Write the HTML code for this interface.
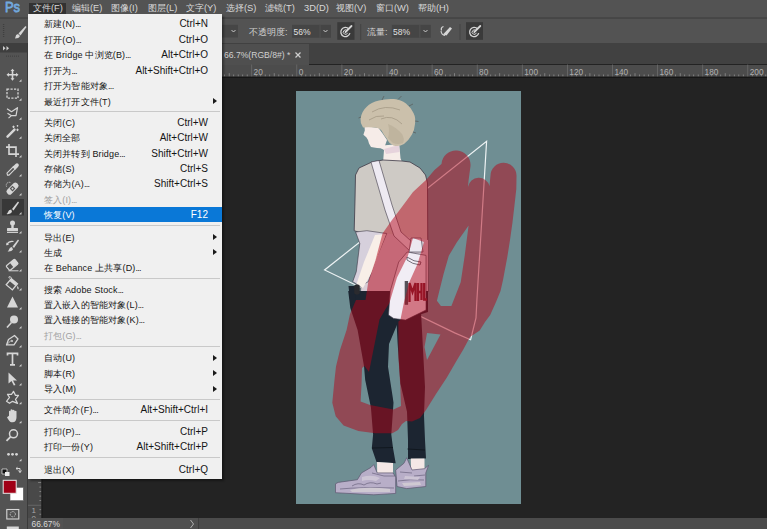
<!DOCTYPE html>
<html><head><meta charset="utf-8">
<style>
*{margin:0;padding:0;box-sizing:border-box}
html,body{width:767px;height:529px;overflow:hidden;background:#232323;font-family:"Liberation Sans",sans-serif}
.a{position:absolute}
#menubar{left:0;top:0;width:767px;height:17px;background:#535353}
#optbar{left:0;top:17px;width:767px;height:26px;background:#535353;border-top:1px solid #474747}
#optline{display:none}
#tabbar{left:0;top:43.3px;width:767px;height:21.2px;background:#414141}
#tab{left:29px;top:44px;width:280px;height:20.5px;background:#4f4f4f}
#hruler{left:29px;top:64.5px;width:738px;height:12.5px;background:#4c4c4c}
#vruler{left:28px;top:77px;width:13.5px;height:441px;background:#494949}
#toolbar{left:0;top:43px;width:28px;height:486px;background:#535353;border-right:1px solid #3a3a3a}
#status{left:28px;top:518px;width:739px;height:11px;background:#4b4b4b}
#canvas{left:296px;top:91px;width:225px;height:413px;background:#6f8e93}
.mt{top:3px;height:11px;font-size:9.3px;line-height:11px;color:#d8d8d8;white-space:nowrap}
#menu{left:28px;top:14px;width:194px;height:465px;background:#f0f0f0;box-shadow:2px 2px 2px rgba(0,0,0,.35)}
.mi{left:16px;letter-spacing:0.15px;font-size:9px;line-height:12px;color:#151515;white-space:nowrap}
.sc{right:14px;font-size:10px;line-height:12px;color:#151515;white-space:nowrap;text-align:right}
.sep{left:2px;width:190px;height:1px;background:#c9c9c9}
.dis{color:#a0a0a0}
.dd{letter-spacing:-0.7px}
.arr{right:5px;width:0;height:0;border-left:4px solid #1a1a1a;border-top:3.5px solid transparent;border-bottom:3.5px solid transparent}
</style></head><body>
<div class="a" id="menubar"></div>
<div class="a" id="optbar"></div>
<div class="a" id="optline"></div>
<div class="a" id="tabbar"></div>
<div class="a" id="tab"></div>
<div class="a" id="hruler"></div>
<div class="a" id="vruler"></div>
<div class="a" id="status"></div>
<div class="a" id="toolbar"></div>
<div class="a" id="canvas"></div>
<!-- illus -->
<svg class="a" style="left:296px;top:91px" width="225" height="413" viewBox="296 91 225 413">
<rect x="296" y="91" width="225" height="413" fill="#6f8e93"/>
<path d="M486.6,141.3 L476.9,300 L476,318 L470.6,339.7 L454.7,332.9 L324.6,270 Z" fill="none" stroke="#eef3f4" stroke-width="1.2" stroke-linejoin="miter"/>
<path d="M377.0,146.0 L399.2,144.0 L400.5,158.2 L402.0,162.0 L383.0,163.0 L384.0,150.0 Z" fill="#f6ece8"/>
<path d="M384.0,149.0 L399.0,145.0 L399.5,152.0 L386.0,154.0 Z" fill="#e6d3dc"/>
<path d="M364.5,126.0 L378.5,127.9 L382.6,133.4 L387.0,140.0 L384.0,148.6 L377.0,148.0 L371.0,147.0 L369.0,143.5 L368.0,140.0 L366.3,137.2 L363.4,134.8 L364.8,130.5 Z" fill="#f6ece8"/>
<path d="M363,127.5 Q360,123 360.5,118.5 Q362,111 366.5,107 Q371,102 379,100.5 Q386,98.5 394,99 Q401,99.5 406,103.5 Q411,107.5 413.5,113 Q416,118 415,124 Q414.5,130 412,134.5 Q409,140 404,144 Q399,147 393.5,145.5 Q389,143.5 387,139 Q383.5,134.5 381.5,130.5 Q379,127.5 374,127.5 Q368,127 363,127.5 Z" fill="#cbc0ab"/>
<path d="M388,138 Q390,131 388,124 Q396,127 402,134 Q405,139 403,143 Q398,145 393,143 Z" fill="#bcb09b" opacity="0.8"/>
<path d="M372,112 Q385,104 400,110 M381,119 Q392,114 402,124 M369,120 Q376,115 384,116" stroke="#9f937f" stroke-width="0.7" fill="none"/>
<path d="M382,100 L384,96 M398,99.5 L401.5,96 M409,106 L413,104 M361,117 L358.5,118 M415,121 L418.5,121.5 M413,132 L416,133" stroke="#55524f" stroke-width="0.6"/>
<path d="M355.5,175.0 L359.0,168.0 L372.0,162.0 L383.0,160.0 L402.0,161.0 L410.0,162.0 L420.0,168.0 L425.5,175.0 L427.5,183.0 L428.0,292.0 L361.0,292.0 L361.5,233.0 L354.2,230.7 L355.0,200.0 Z" fill="#cecac5" stroke="#3d3846" stroke-width="0.8"/>
<path d="M386.7,233.5 L428.0,240.0 L428.0,292.0 L361.0,292.0 L366.9,232.0 Z" fill="#d8cdd6"/>
<path d="M355.6,232.0 L366.9,230.7 L386.7,233.5 L375.4,260.4 L368.3,281.7 L360.0,286.0 L352.7,281.7 L356.3,271.7 L359.8,243.4 Z" fill="#d6d0dc" stroke="#3d3846" stroke-width="0.6"/>
<path d="M375.0,235.0 L386.0,234.0 L380.0,250.0 L372.0,272.0 L363.0,288.0 L356.5,284.0 L364.0,262.0 Z" fill="#f8efe8"/>
<path d="M371.0,162.0 L379.0,160.5 L392.0,205.0 L401.0,232.0 L421.0,250.0 L411.0,252.0 L394.0,236.0 L385.0,210.0 Z" fill="#eeeaf2" stroke="#3d3846" stroke-width="0.6"/>
<path d="M348.2,291.0 L428.0,291.0 L428.0,312.0 L398.4,321.4 L389.0,344.0 L388.0,366.8 L392.7,397.0 L393.5,402.7 L391.3,434.5 L393.0,448.0 L395.7,463.3 L376.5,462.0 L371.8,448.2 L373.1,434.5 L370.9,407.2 L365.2,380.0 L364.0,366.0 L357.6,330.0 L350.3,308.0 Z" fill="#1c2531"/>
<path d="M396.0,312.0 L421.0,312.0 L422.5,340.0 L425.0,387.0 L424.0,415.6 L425.0,440.0 L426.0,458.5 L408.0,459.0 L408.0,440.0 L407.0,411.8 L400.4,383.5 L397.6,343.0 Z" fill="#1c2531"/>
<path d="M372,448 L393,447.5 M407.5,449 L425,450" stroke="#0e141b" stroke-width="0.8"/>
<path d="M398.7,262.0 L407.2,252.0 L426.0,255.4 L426.0,310.0 L405.5,320.1 L393.6,318.4 L388.5,315.0 L390.2,291.2 Z" fill="#f1edf5" stroke="#3d3846" stroke-width="0.6"/>
<path d="M411,238 L421,238 L423,252 L409,252 Z" fill="#ece8f0" stroke="#3d3846" stroke-width="0.6"/>
<path d="M407,257 Q414,262 421,262 L420,265 Q412,264 407,260 Z" fill="none" stroke="#3d3846" stroke-width="0.7"/>
<rect x="404.7" y="281" width="3.4" height="23.8" fill="#555058"/>
<path d="M409.5,302 V283 L412.5,292 L415.5,283 V301 M418,283 V301 M418,292 H421.5 M421.5,283 V300 M424.2,283 V299.5 H427" stroke="#7a2434" stroke-width="2.3" fill="none" stroke-linejoin="miter"/>
<path d="M348.5,286.0 L355.6,286.0 L356.0,300.0 L350.0,300.0 Z" fill="#1c2531"/>
<rect x="354.2" y="284.5" width="5.6" height="9.9" rx="2" fill="#2a2a2e"/>
<path d="M377.0,462.0 L393.0,463.0 L393.0,474.0 L377.2,473.0 Z" fill="#f4e8e6"/>
<path d="M410.8,458.5 L424.5,458.5 L424.5,470.0 L411.0,470.0 Z" fill="#f4e8e6"/>
<path d="M395.7,470.1 L403.9,463.3 L406.7,457.8 L412.0,470.0 L424.5,468.7 L428.6,465.3 L425.8,472.9 L425.8,486.5 L406.7,488.6 L397.0,486.5 Z" fill="#b8aec8" stroke="#5d5670" stroke-width="0.7"/>
<path d="M335.5,483.8 L338.2,482.4 L357.4,479.7 L361.5,472.9 L371.0,467.4 L373.8,464.6 L377.2,472.9 L393.0,472.9 L395.7,477.0 L395.7,493.4 L373.8,494.8 L335.5,492.7 Z" fill="#b8aec8" stroke="#5d5670" stroke-width="0.7"/>
<path d="M352,486 Q358,482 364,485 Q370,481 377,484 L381,483 M340,489 Q360,487 394,488 M398,481 Q410,479 424,480 M414,476 L425,475 M372,473 L384,476 L395,476 M400,472 L412,473" stroke="#5d5670" stroke-width="0.6" fill="none"/>
<path d="M362,477 Q372,474 380,478 L376,481 Q368,479 362,481 Z M405,476 L420,477 L418,480 L404,479 Z" fill="#d2cbd8" opacity="0.8"/>
<path d="M350,490 Q365,486 390,489 L390,492 L352,492 Z M402,483 L420,482 L421,485 L404,486 Z" fill="#cfc9d2"/>
<path d="M441.5,164 A14.5,14.5 0 0 1 470.5,166 L468.5,181 L468,187 A11,11 0 0 1 489.5,186 L490.5,175.5 A13,13 0 0 1 516.5,176 L516.3,189 L514.5,205 L512.4,223 L510,240 L507.3,257 L503,280 L500.5,291 L496,302 L490.2,314.9 L485,322 L479.7,330.6 L470,337 L463,350 L457,360 L446.7,377.8 L436,394 L426,410 L420,418 L412,421.5 L406,421 L402,424 L398,430 L392.4,433.3 L375.4,433.3 L358.4,431 L343.6,425.4 L335.7,416.3 L332.3,402.7 L334.5,380 L336,366.4 L340,350 L346.6,330 L350,314 L356,300 L365.5,300 L368.3,281.7 L375.4,260.4 L382.5,233.5 L392,220 L400,209.5 L413,192 L426,180 L434.5,170 Z M468.6,225.4 L464.7,255.8 L460.7,282.2 L451.4,306.0 L440.9,306.0 L436.9,300.7 L443.5,274.3 L448.8,255.8 L456.7,242.6 Z M427.0,333.0 L440.5,334.5 L427.0,360.0 L424.5,347.0 Z M413.0,238.0 L408.0,255.4 L397.0,277.6 L389.4,303.1 L385.0,310.0 L379.5,319.5 L373.8,347.9 L369.0,372.0 L364.5,366.0 L362.0,368.0 L361.5,385.0 L360.6,401.6 L370.0,405.0 L393.5,409.5 L401.0,406.0 L400.3,385.7 L398.4,357.3 L398.4,321.4 L400.4,320.0 L403.8,303.0 L409.0,282.7 L417.5,264.0 L424.0,242.0 Z" fill="#b40318" fill-opacity="0.5" fill-rule="evenodd"/>
</svg>
<!-- /illus -->
<!-- toolbar -->
<svg class="a" style="left:0;top:0" width="28" height="529" viewBox="0 0 28 529"><rect x="0" y="43" width="27" height="9.5" fill="#3e3e3e"/><path d="M3,46 l2.5,2.2 l-2.5,2.2 z M6.5,46 l2.5,2.2 l-2.5,2.2 z" fill="#cfcfcf"/><path d="M6,56.3 H20" stroke="#454545" stroke-width="1.5" stroke-dasharray="1,1"/><rect x="2" y="199" width="22" height="16.5" fill="#383838"/><g transform="translate(12.5,74.70)"><path d="M0,-6 L-2,-3.6 L-0.8,-3.6 L-0.8,-0.8 L-3.6,-0.8 L-3.6,-2 L-6,0 L-3.6,2 L-3.6,0.8 L-0.8,0.8 L-0.8,3.6 L-2,3.6 L0,6 L2,3.6 L0.8,3.6 L0.8,0.8 L3.6,0.8 L3.6,2 L6,0 L3.6,-2 L3.6,-0.8 L0.8,-0.8 L0.8,-3.6 L2,-3.6 Z" fill="#d6d6d6"/></g><path d="M21.5,79.20 l0,2.5 l-2.5,0 z" fill="#cfcfcf"/><g transform="translate(12.5,93.68)"><rect x="-5.5" y="-4.5" width="11" height="9" fill="none" stroke="#d6d6d6" stroke-width="1.3" stroke-dasharray="2.2,1.3"/></g><path d="M21.5,98.18 l0,2.5 l-2.5,0 z" fill="#cfcfcf"/><g transform="translate(12.5,112.66)"><path d="M-5.5,-4 L-1,-1 L5,-5 L3.5,3 L-1,3 L-4,5.5 M-1,3 L-5,0.5" fill="none" stroke="#d6d6d6" stroke-width="1.2" stroke-linejoin="round"/></g><path d="M21.5,117.16 l0,2.5 l-2.5,0 z" fill="#cfcfcf"/><g transform="translate(12.5,131.64)"><path d="M-5,5 L2,-2" stroke="#d6d6d6" stroke-width="2.4" stroke-linecap="round"/><path d="M1,-6 v2.5 M-0.2,-4.8 h2.5 M5,-3 v2.5 M3.8,-1.8 h2.5 M5,-6.5 v1.5 M4.2,-5.8 h1.6" stroke="#d6d6d6" stroke-width="1"/></g><path d="M21.5,136.14 l0,2.5 l-2.5,0 z" fill="#cfcfcf"/><g transform="translate(12.5,150.62)"><path d="M-3.5,-6.5 V3.5 H6.5 M-6.5,-3.5 H3.5 V6.5" fill="none" stroke="#d6d6d6" stroke-width="1.6"/></g><path d="M21.5,155.12 l0,2.5 l-2.5,0 z" fill="#cfcfcf"/><g transform="translate(12.5,169.60)"><path d="M-5,5.5 L-5.5,3.5 L1,-3 L3,-1 L-3.5,5.5 Z" fill="none" stroke="#d6d6d6" stroke-width="1.1"/><path d="M0,-2.5 L3,-5.5 Q4.5,-7 6,-5.5 Q7,-4 5.5,-2.5 L2.5,0.5 Z" fill="#d6d6d6"/></g><path d="M21.5,174.10 l0,2.5 l-2.5,0 z" fill="#cfcfcf"/><g transform="translate(12.5,188.58)"><g transform="rotate(-45)"><rect x="-7" y="-3" width="14" height="6" rx="2.5" fill="#d6d6d6"/><rect x="-2" y="-2" width="4" height="4" fill="#535353"/><circle cx="0" cy="0" r="1" fill="#d6d6d6"/></g><path d="M-6,-2 A3,3 0 0 1 -2,-6" stroke="#d6d6d6" stroke-width="1" fill="none" stroke-dasharray="1,1"/></g><path d="M21.5,193.08 l0,2.5 l-2.5,0 z" fill="#cfcfcf"/><g transform="translate(12.5,207.56)"><path d="M5.5,-6 L-0.5,1.5 L1,3 L6.5,-5 Z" fill="#d6d6d6"/><path d="M-1.2,2 Q-4,2 -4.5,4.5 Q-5,6 -6,6.5 Q-2,7 -0.5,4.5 Z" fill="#d6d6d6"/></g><path d="M21.5,212.06 l0,2.5 l-2.5,0 z" fill="#cfcfcf"/><g transform="translate(12.5,226.54)"><circle cx="0" cy="-3.5" r="2.5" fill="#d6d6d6"/><rect x="-1.2" y="-2" width="2.4" height="4" fill="#d6d6d6"/><rect x="-5.5" y="1.5" width="11" height="3" rx="0.5" fill="#d6d6d6"/><rect x="-5.5" y="5.2" width="11" height="1.2" fill="#d6d6d6"/></g><path d="M21.5,231.04 l0,2.5 l-2.5,0 z" fill="#cfcfcf"/><g transform="translate(12.5,245.52)"><path d="M5.5,-6 L0,1 L1.5,2.5 L6.5,-5 Z" fill="#d6d6d6"/><path d="M-0.5,1.5 Q-3,1.5 -3.5,4 Q-4,5.5 -5,6 Q-1,6.5 0.5,4 Z" fill="#d6d6d6"/><path d="M-6,-1 Q-3,-5 1,-4" fill="none" stroke="#d6d6d6" stroke-width="1.2"/><path d="M-6,-3 L-6,0 L-3.5,-1" fill="#d6d6d6"/></g><path d="M21.5,250.02 l0,2.5 l-2.5,0 z" fill="#cfcfcf"/><g transform="translate(12.5,264.50)"><g transform="rotate(-40)"><rect x="-6" y="-3" width="11" height="6" rx="1" fill="none" stroke="#d6d6d6" stroke-width="1.2"/><rect x="-1" y="-3" width="6" height="6" fill="#d6d6d6"/></g><path d="M-4,6.3 H6" stroke="#d6d6d6" stroke-width="1"/></g><path d="M21.5,269.00 l0,2.5 l-2.5,0 z" fill="#cfcfcf"/><g transform="translate(12.5,283.48)"><g transform="rotate(40)"><rect x="-4" y="-3" width="8" height="8" fill="none" stroke="#d6d6d6" stroke-width="1.3"/><path d="M-4,-3 H4 V0 H-4 Z" fill="#d6d6d6"/></g><path d="M-3,-5 Q-5,-8 -1,-6" fill="none" stroke="#d6d6d6" stroke-width="1"/><path d="M5,2 Q7,5 5.5,6 Q4,5 5,2" fill="#d6d6d6"/></g><path d="M21.5,287.98 l0,2.5 l-2.5,0 z" fill="#cfcfcf"/><g transform="translate(12.5,302.46)"><path d="M0,-6 L5.5,5 H-5.5 Z" fill="#d6d6d6"/></g><path d="M21.5,306.96 l0,2.5 l-2.5,0 z" fill="#cfcfcf"/><g transform="translate(12.5,321.44)"><circle cx="1.5" cy="-2" r="4" fill="#d6d6d6"/><path d="M-1,1 L-5.5,6" stroke="#d6d6d6" stroke-width="1.6"/></g><path d="M21.5,325.94 l0,2.5 l-2.5,0 z" fill="#cfcfcf"/><g transform="translate(12.5,340.42)"><path d="M-6,4.5 L-4,-1 L2,-5 L5.5,-1.5 L1.5,4.5 Z" fill="none" stroke="#d6d6d6" stroke-width="1.3" stroke-linejoin="round"/><circle cx="-0.5" cy="0.5" r="1" fill="#d6d6d6"/><path d="M-6,4.5 L-1,-0.3" stroke="#d6d6d6" stroke-width="0.8"/></g><path d="M21.5,344.92 l0,2.5 l-2.5,0 z" fill="#cfcfcf"/><g transform="translate(12.5,359.40)"><path d="M-5,-4 V-6 H5 V-4 M0,-6 V5.5 M-2.5,5.5 H2.5" fill="none" stroke="#d6d6d6" stroke-width="1.7"/></g><path d="M21.5,363.90 l0,2.5 l-2.5,0 z" fill="#cfcfcf"/><g transform="translate(12.5,378.38)"><path d="M-4,-6 L4.5,2 L0.5,2 L3,6.5 L1.3,7 L-1,2.5 L-4,5 Z" fill="#d6d6d6"/></g><path d="M21.5,382.88 l0,2.5 l-2.5,0 z" fill="#cfcfcf"/><g transform="translate(12.5,397.36)"><path d="M-6,4 L-3,0 L-5,-3 L-1,-3 L1,-6 L3,-2 L6,-2 L3,2 L5,6 L0,4 L-3,6 Z" fill="none" stroke="#d6d6d6" stroke-width="1.2" stroke-linejoin="round"/></g><path d="M21.5,401.86 l0,2.5 l-2.5,0 z" fill="#cfcfcf"/><g transform="translate(12.5,416.34)"><path d="M-5.5,1 L-3.5,-0.5 V-5 Q-2.8,-6 -2,-5 V-6.5 Q-1,-7.5 0,-6.5 V-6 Q1,-7 2,-6 V-5 Q3,-6 4,-5 V1 Q4,6 0,6 H-1 Q-3,6 -5.5,1 Z" fill="#d6d6d6"/></g><path d="M21.5,420.84 l0,2.5 l-2.5,0 z" fill="#cfcfcf"/><g transform="translate(12.5,435.32)"><circle cx="1" cy="-1.5" r="4" fill="none" stroke="#d6d6d6" stroke-width="1.5"/><path d="M-2,1.5 L-6,5.5" stroke="#d6d6d6" stroke-width="1.8"/></g><g transform="translate(12.5,454.30)"><circle cx="-4" cy="0" r="1.4" fill="#d6d6d6"/><circle cx="0" cy="0" r="1.4" fill="#d6d6d6"/><circle cx="4" cy="0" r="1.4" fill="#d6d6d6"/></g><path d="M21.5,458.80 l0,2.5 l-2.5,0 z" fill="#cfcfcf"/><path d="M2,469 h5 v5 h-5 z" fill="#111" stroke="#ddd" stroke-width="0.8"/><path d="M5,472 h4.5 v4 h-4.5 z" fill="#eee"/><path d="M16,468.5 h4 v4 M18.5,470.5 l1.5,2 l1.5,-2 M16,468.5 l1.5,-1.2 M16,468.5 l1.5,1.2" fill="none" stroke="#d6d6d6" stroke-width="1"/><rect x="10" y="487.3" width="13.3" height="13.4" fill="#fff" stroke="#5a5a5a" stroke-width="0.6"/><rect x="3.2" y="480.3" width="13" height="13" fill="#a00016" stroke="#e8e8e8" stroke-width="1"/><rect x="6.8" y="509.5" width="12" height="9.5" fill="none" stroke="#d6d6d6" stroke-width="1.1"/><circle cx="12.8" cy="514.2" r="2.6" fill="none" stroke="#d6d6d6" stroke-width="1" stroke-dasharray="1,0.8"/><rect x="6.8" y="526.5" width="12" height="3" fill="#d6d6d6"/></svg>

<div class="a" style="left:0;top:18px;width:767px;height:1.3px;background:#464646"></div>
<svg class="a" style="left:0;top:0" width="767" height="80" viewBox="0 0 767 80"><path d="M3.6,24 V38" stroke="#3f3f3f" stroke-width="1.3" stroke-dasharray="1,1"/><path d="M25.5,26 L18.5,33.5 L20.5,35.5 L26.5,27 Z" fill="#d6d6d6"/><path d="M18,34 Q15.5,34.5 15.5,37 L15,38.5 Q19,38.5 20,36 Z" fill="#d6d6d6"/><rect x="222" y="24.8" width="16" height="12.7" fill="#464646"/><path d="M231.5,30 l2,2 l2,-2" fill="none" stroke="#d6d6d6" stroke-width="0.9"/><rect x="292" y="24.8" width="39" height="12.9" fill="#454545"/><rect x="319.6" y="24.8" width="0.9" height="12.9" fill="#535353"/><path d="M323.5,30 l2,2 l2,-2" fill="none" stroke="#d6d6d6" stroke-width="0.9"/><rect x="337.3" y="22.2" width="17.2" height="17.6" fill="#3a3a3a"/><path d="M348.7,28.8 A4.6,4.6 0 1 0 349.9,33.2" fill="none" stroke="#d6d6d6" stroke-width="1.3"/><path d="M347.1,30.6 A2.2,2.2 0 1 0 347.6,32.8" fill="none" stroke="#d6d6d6" stroke-width="1"/><path d="M345.5,32 L351.5,26" stroke="#d6d6d6" stroke-width="1.8" stroke-linecap="round"/><rect x="360.2" y="24" width="1" height="16" fill="#444"/><rect x="391.8" y="24.8" width="39" height="12.9" fill="#454545"/><rect x="419.4" y="24.8" width="0.9" height="12.9" fill="#535353"/><path d="M423.5,30 l2,2 l2,-2" fill="none" stroke="#d6d6d6" stroke-width="0.9"/><path d="M441.5,30.5 Q440.5,27.5 443.5,26.5" fill="none" stroke="#d6d6d6" stroke-width="1.2"/><path d="M443,34.5 L450,27 L452,28.5 L446.5,35.5 Z" fill="#d6d6d6"/><path d="M441,31 Q441.5,35 445,35.5" fill="none" stroke="#d6d6d6" stroke-width="1.1"/><rect x="459.5" y="24" width="1" height="16" fill="#444"/><rect x="466" y="22.2" width="17" height="17.6" fill="#3a3a3a"/><path d="M477.5,28.8 A4.6,4.6 0 1 0 478.7,33.2" fill="none" stroke="#d6d6d6" stroke-width="1.3"/><path d="M475.90000000000003,30.6 A2.2,2.2 0 1 0 476.40000000000003,32.8" fill="none" stroke="#d6d6d6" stroke-width="1"/><path d="M474.3,32 L480.3,26" stroke="#d6d6d6" stroke-width="1.8" stroke-linecap="round"/></svg>
<div class="a" style="left:249px;top:26px;font-size:9px;line-height:12px;color:#d0d0d0;white-space:nowrap">不透明度:</div>
<div class="a" style="left:293.5px;top:26px;font-size:8.5px;line-height:12px;color:#e0e0e0;white-space:nowrap">56%</div>
<div class="a" style="left:367px;top:26px;font-size:9px;line-height:12px;color:#d0d0d0;white-space:nowrap">流量:</div>
<div class="a" style="left:393px;top:26px;font-size:8.5px;line-height:12px;color:#e0e0e0;white-space:nowrap">58%</div>
<div class="a" style="left:224px;top:48.5px;font-size:8.6px;line-height:12px;color:#d0d0d0;white-space:nowrap">66.7%(RGB/8#) *</div>
<svg class="a" style="left:294px;top:51px" width="8" height="8" viewBox="0 0 8 8"><path d="M1.5,1.5 L6.5,6.5 M6.5,1.5 L1.5,6.5" stroke="#cfcfcf" stroke-width="1.2"/></svg>
<!-- ruler --><svg class="a" style="left:0;top:0" width="767" height="529" viewBox="0 0 767 529"><rect x="70.9" y="64.5" width="0.8" height="12.5" fill="#6c6c6c"/><text x="73.2" y="74.6" font-size="8.3" fill="#b0b0b0" font-family="Liberation Sans">100</text><rect x="116.0" y="64.5" width="0.8" height="12.5" fill="#6c6c6c"/><text x="118.3" y="74.6" font-size="8.3" fill="#b0b0b0" font-family="Liberation Sans">80</text><rect x="161.1" y="64.5" width="0.8" height="12.5" fill="#6c6c6c"/><text x="163.4" y="74.6" font-size="8.3" fill="#b0b0b0" font-family="Liberation Sans">60</text><rect x="206.2" y="64.5" width="0.8" height="12.5" fill="#6c6c6c"/><text x="208.5" y="74.6" font-size="8.3" fill="#b0b0b0" font-family="Liberation Sans">40</text><rect x="251.3" y="64.5" width="0.8" height="12.5" fill="#6c6c6c"/><text x="253.6" y="74.6" font-size="8.3" fill="#b0b0b0" font-family="Liberation Sans">20</text><rect x="296.4" y="64.5" width="0.8" height="12.5" fill="#6c6c6c"/><text x="298.7" y="74.6" font-size="8.3" fill="#b0b0b0" font-family="Liberation Sans">0</text><rect x="341.5" y="64.5" width="0.8" height="12.5" fill="#6c6c6c"/><text x="343.8" y="74.6" font-size="8.3" fill="#b0b0b0" font-family="Liberation Sans">20</text><rect x="386.6" y="64.5" width="0.8" height="12.5" fill="#6c6c6c"/><text x="388.9" y="74.6" font-size="8.3" fill="#b0b0b0" font-family="Liberation Sans">40</text><rect x="431.7" y="64.5" width="0.8" height="12.5" fill="#6c6c6c"/><text x="434.0" y="74.6" font-size="8.3" fill="#b0b0b0" font-family="Liberation Sans">60</text><rect x="476.8" y="64.5" width="0.8" height="12.5" fill="#6c6c6c"/><text x="479.1" y="74.6" font-size="8.3" fill="#b0b0b0" font-family="Liberation Sans">80</text><rect x="521.9" y="64.5" width="0.8" height="12.5" fill="#6c6c6c"/><text x="524.2" y="74.6" font-size="8.3" fill="#b0b0b0" font-family="Liberation Sans">100</text><rect x="567.0" y="64.5" width="0.8" height="12.5" fill="#6c6c6c"/><text x="569.3" y="74.6" font-size="8.3" fill="#b0b0b0" font-family="Liberation Sans">120</text><rect x="612.1" y="64.5" width="0.8" height="12.5" fill="#6c6c6c"/><text x="614.4" y="74.6" font-size="8.3" fill="#b0b0b0" font-family="Liberation Sans">140</text><rect x="657.2" y="64.5" width="0.8" height="12.5" fill="#6c6c6c"/><text x="659.5" y="74.6" font-size="8.3" fill="#b0b0b0" font-family="Liberation Sans">160</text><rect x="702.3" y="64.5" width="0.8" height="12.5" fill="#6c6c6c"/><text x="704.6" y="74.6" font-size="8.3" fill="#b0b0b0" font-family="Liberation Sans">180</text><rect x="747.4" y="64.5" width="0.8" height="12.5" fill="#6c6c6c"/><text x="749.7" y="74.6" font-size="8.3" fill="#b0b0b0" font-family="Liberation Sans">200</text><rect x="43.8" y="74.5" width="0.8" height="2" fill="#8e8e8e"/><rect x="48.3" y="73.2" width="0.8" height="3.3" fill="#8e8e8e"/><rect x="52.9" y="74.5" width="0.8" height="2" fill="#8e8e8e"/><rect x="57.4" y="74.5" width="0.8" height="2" fill="#8e8e8e"/><rect x="61.9" y="74.5" width="0.8" height="2" fill="#8e8e8e"/><rect x="66.4" y="74.5" width="0.8" height="2" fill="#8e8e8e"/><rect x="75.4" y="74.5" width="0.8" height="2" fill="#8e8e8e"/><rect x="79.9" y="74.5" width="0.8" height="2" fill="#8e8e8e"/><rect x="84.4" y="74.5" width="0.8" height="2" fill="#8e8e8e"/><rect x="88.9" y="74.5" width="0.8" height="2" fill="#8e8e8e"/><rect x="93.4" y="73.2" width="0.8" height="3.3" fill="#8e8e8e"/><rect x="98.0" y="74.5" width="0.8" height="2" fill="#8e8e8e"/><rect x="102.5" y="74.5" width="0.8" height="2" fill="#8e8e8e"/><rect x="107.0" y="74.5" width="0.8" height="2" fill="#8e8e8e"/><rect x="111.5" y="74.5" width="0.8" height="2" fill="#8e8e8e"/><rect x="120.5" y="74.5" width="0.8" height="2" fill="#8e8e8e"/><rect x="125.0" y="74.5" width="0.8" height="2" fill="#8e8e8e"/><rect x="129.5" y="74.5" width="0.8" height="2" fill="#8e8e8e"/><rect x="134.0" y="74.5" width="0.8" height="2" fill="#8e8e8e"/><rect x="138.5" y="73.2" width="0.8" height="3.3" fill="#8e8e8e"/><rect x="143.1" y="74.5" width="0.8" height="2" fill="#8e8e8e"/><rect x="147.6" y="74.5" width="0.8" height="2" fill="#8e8e8e"/><rect x="152.1" y="74.5" width="0.8" height="2" fill="#8e8e8e"/><rect x="156.6" y="74.5" width="0.8" height="2" fill="#8e8e8e"/><rect x="165.6" y="74.5" width="0.8" height="2" fill="#8e8e8e"/><rect x="170.1" y="74.5" width="0.8" height="2" fill="#8e8e8e"/><rect x="174.6" y="74.5" width="0.8" height="2" fill="#8e8e8e"/><rect x="179.1" y="74.5" width="0.8" height="2" fill="#8e8e8e"/><rect x="183.6" y="73.2" width="0.8" height="3.3" fill="#8e8e8e"/><rect x="188.2" y="74.5" width="0.8" height="2" fill="#8e8e8e"/><rect x="192.7" y="74.5" width="0.8" height="2" fill="#8e8e8e"/><rect x="197.2" y="74.5" width="0.8" height="2" fill="#8e8e8e"/><rect x="201.7" y="74.5" width="0.8" height="2" fill="#8e8e8e"/><rect x="210.7" y="74.5" width="0.8" height="2" fill="#8e8e8e"/><rect x="215.2" y="74.5" width="0.8" height="2" fill="#8e8e8e"/><rect x="219.7" y="74.5" width="0.8" height="2" fill="#8e8e8e"/><rect x="224.2" y="74.5" width="0.8" height="2" fill="#8e8e8e"/><rect x="228.8" y="73.2" width="0.8" height="3.3" fill="#8e8e8e"/><rect x="233.3" y="74.5" width="0.8" height="2" fill="#8e8e8e"/><rect x="237.8" y="74.5" width="0.8" height="2" fill="#8e8e8e"/><rect x="242.3" y="74.5" width="0.8" height="2" fill="#8e8e8e"/><rect x="246.8" y="74.5" width="0.8" height="2" fill="#8e8e8e"/><rect x="255.8" y="74.5" width="0.8" height="2" fill="#8e8e8e"/><rect x="260.3" y="74.5" width="0.8" height="2" fill="#8e8e8e"/><rect x="264.8" y="74.5" width="0.8" height="2" fill="#8e8e8e"/><rect x="269.3" y="74.5" width="0.8" height="2" fill="#8e8e8e"/><rect x="273.8" y="73.2" width="0.8" height="3.3" fill="#8e8e8e"/><rect x="278.4" y="74.5" width="0.8" height="2" fill="#8e8e8e"/><rect x="282.9" y="74.5" width="0.8" height="2" fill="#8e8e8e"/><rect x="287.4" y="74.5" width="0.8" height="2" fill="#8e8e8e"/><rect x="291.9" y="74.5" width="0.8" height="2" fill="#8e8e8e"/><rect x="300.9" y="74.5" width="0.8" height="2" fill="#8e8e8e"/><rect x="305.4" y="74.5" width="0.8" height="2" fill="#8e8e8e"/><rect x="309.9" y="74.5" width="0.8" height="2" fill="#8e8e8e"/><rect x="314.4" y="74.5" width="0.8" height="2" fill="#8e8e8e"/><rect x="318.9" y="73.2" width="0.8" height="3.3" fill="#8e8e8e"/><rect x="323.5" y="74.5" width="0.8" height="2" fill="#8e8e8e"/><rect x="328.0" y="74.5" width="0.8" height="2" fill="#8e8e8e"/><rect x="332.5" y="74.5" width="0.8" height="2" fill="#8e8e8e"/><rect x="337.0" y="74.5" width="0.8" height="2" fill="#8e8e8e"/><rect x="346.0" y="74.5" width="0.8" height="2" fill="#8e8e8e"/><rect x="350.5" y="74.5" width="0.8" height="2" fill="#8e8e8e"/><rect x="355.0" y="74.5" width="0.8" height="2" fill="#8e8e8e"/><rect x="359.5" y="74.5" width="0.8" height="2" fill="#8e8e8e"/><rect x="364.1" y="73.2" width="0.8" height="3.3" fill="#8e8e8e"/><rect x="368.6" y="74.5" width="0.8" height="2" fill="#8e8e8e"/><rect x="373.1" y="74.5" width="0.8" height="2" fill="#8e8e8e"/><rect x="377.6" y="74.5" width="0.8" height="2" fill="#8e8e8e"/><rect x="382.1" y="74.5" width="0.8" height="2" fill="#8e8e8e"/><rect x="391.1" y="74.5" width="0.8" height="2" fill="#8e8e8e"/><rect x="395.6" y="74.5" width="0.8" height="2" fill="#8e8e8e"/><rect x="400.1" y="74.5" width="0.8" height="2" fill="#8e8e8e"/><rect x="404.6" y="74.5" width="0.8" height="2" fill="#8e8e8e"/><rect x="409.1" y="73.2" width="0.8" height="3.3" fill="#8e8e8e"/><rect x="413.7" y="74.5" width="0.8" height="2" fill="#8e8e8e"/><rect x="418.2" y="74.5" width="0.8" height="2" fill="#8e8e8e"/><rect x="422.7" y="74.5" width="0.8" height="2" fill="#8e8e8e"/><rect x="427.2" y="74.5" width="0.8" height="2" fill="#8e8e8e"/><rect x="436.2" y="74.5" width="0.8" height="2" fill="#8e8e8e"/><rect x="440.7" y="74.5" width="0.8" height="2" fill="#8e8e8e"/><rect x="445.2" y="74.5" width="0.8" height="2" fill="#8e8e8e"/><rect x="449.7" y="74.5" width="0.8" height="2" fill="#8e8e8e"/><rect x="454.2" y="73.2" width="0.8" height="3.3" fill="#8e8e8e"/><rect x="458.8" y="74.5" width="0.8" height="2" fill="#8e8e8e"/><rect x="463.3" y="74.5" width="0.8" height="2" fill="#8e8e8e"/><rect x="467.8" y="74.5" width="0.8" height="2" fill="#8e8e8e"/><rect x="472.3" y="74.5" width="0.8" height="2" fill="#8e8e8e"/><rect x="481.3" y="74.5" width="0.8" height="2" fill="#8e8e8e"/><rect x="485.8" y="74.5" width="0.8" height="2" fill="#8e8e8e"/><rect x="490.3" y="74.5" width="0.8" height="2" fill="#8e8e8e"/><rect x="494.8" y="74.5" width="0.8" height="2" fill="#8e8e8e"/><rect x="499.3" y="73.2" width="0.8" height="3.3" fill="#8e8e8e"/><rect x="503.9" y="74.5" width="0.8" height="2" fill="#8e8e8e"/><rect x="508.4" y="74.5" width="0.8" height="2" fill="#8e8e8e"/><rect x="512.9" y="74.5" width="0.8" height="2" fill="#8e8e8e"/><rect x="517.4" y="74.5" width="0.8" height="2" fill="#8e8e8e"/><rect x="526.4" y="74.5" width="0.8" height="2" fill="#8e8e8e"/><rect x="530.9" y="74.5" width="0.8" height="2" fill="#8e8e8e"/><rect x="535.4" y="74.5" width="0.8" height="2" fill="#8e8e8e"/><rect x="539.9" y="74.5" width="0.8" height="2" fill="#8e8e8e"/><rect x="544.4" y="73.2" width="0.8" height="3.3" fill="#8e8e8e"/><rect x="549.0" y="74.5" width="0.8" height="2" fill="#8e8e8e"/><rect x="553.5" y="74.5" width="0.8" height="2" fill="#8e8e8e"/><rect x="558.0" y="74.5" width="0.8" height="2" fill="#8e8e8e"/><rect x="562.5" y="74.5" width="0.8" height="2" fill="#8e8e8e"/><rect x="571.5" y="74.5" width="0.8" height="2" fill="#8e8e8e"/><rect x="576.0" y="74.5" width="0.8" height="2" fill="#8e8e8e"/><rect x="580.5" y="74.5" width="0.8" height="2" fill="#8e8e8e"/><rect x="585.0" y="74.5" width="0.8" height="2" fill="#8e8e8e"/><rect x="589.5" y="73.2" width="0.8" height="3.3" fill="#8e8e8e"/><rect x="594.1" y="74.5" width="0.8" height="2" fill="#8e8e8e"/><rect x="598.6" y="74.5" width="0.8" height="2" fill="#8e8e8e"/><rect x="603.1" y="74.5" width="0.8" height="2" fill="#8e8e8e"/><rect x="607.6" y="74.5" width="0.8" height="2" fill="#8e8e8e"/><rect x="616.6" y="74.5" width="0.8" height="2" fill="#8e8e8e"/><rect x="621.1" y="74.5" width="0.8" height="2" fill="#8e8e8e"/><rect x="625.6" y="74.5" width="0.8" height="2" fill="#8e8e8e"/><rect x="630.1" y="74.5" width="0.8" height="2" fill="#8e8e8e"/><rect x="634.6" y="73.2" width="0.8" height="3.3" fill="#8e8e8e"/><rect x="639.2" y="74.5" width="0.8" height="2" fill="#8e8e8e"/><rect x="643.7" y="74.5" width="0.8" height="2" fill="#8e8e8e"/><rect x="648.2" y="74.5" width="0.8" height="2" fill="#8e8e8e"/><rect x="652.7" y="74.5" width="0.8" height="2" fill="#8e8e8e"/><rect x="661.7" y="74.5" width="0.8" height="2" fill="#8e8e8e"/><rect x="666.2" y="74.5" width="0.8" height="2" fill="#8e8e8e"/><rect x="670.7" y="74.5" width="0.8" height="2" fill="#8e8e8e"/><rect x="675.2" y="74.5" width="0.8" height="2" fill="#8e8e8e"/><rect x="679.8" y="73.2" width="0.8" height="3.3" fill="#8e8e8e"/><rect x="684.3" y="74.5" width="0.8" height="2" fill="#8e8e8e"/><rect x="688.8" y="74.5" width="0.8" height="2" fill="#8e8e8e"/><rect x="693.3" y="74.5" width="0.8" height="2" fill="#8e8e8e"/><rect x="697.8" y="74.5" width="0.8" height="2" fill="#8e8e8e"/><rect x="706.8" y="74.5" width="0.8" height="2" fill="#8e8e8e"/><rect x="711.3" y="74.5" width="0.8" height="2" fill="#8e8e8e"/><rect x="715.8" y="74.5" width="0.8" height="2" fill="#8e8e8e"/><rect x="720.3" y="74.5" width="0.8" height="2" fill="#8e8e8e"/><rect x="724.8" y="73.2" width="0.8" height="3.3" fill="#8e8e8e"/><rect x="729.4" y="74.5" width="0.8" height="2" fill="#8e8e8e"/><rect x="733.9" y="74.5" width="0.8" height="2" fill="#8e8e8e"/><rect x="738.4" y="74.5" width="0.8" height="2" fill="#8e8e8e"/><rect x="742.9" y="74.5" width="0.8" height="2" fill="#8e8e8e"/><rect x="751.9" y="74.5" width="0.8" height="2" fill="#8e8e8e"/><rect x="756.4" y="74.5" width="0.8" height="2" fill="#8e8e8e"/><rect x="760.9" y="74.5" width="0.8" height="2" fill="#8e8e8e"/><rect x="765.4" y="74.5" width="0.8" height="2" fill="#8e8e8e"/><rect x="29" y="76.6" width="738" height="1.2" fill="#151515"/><rect x="28" y="98.8" width="13.4" height="0.8" fill="#6c6c6c"/><rect x="39.4" y="103.4" width="2" height="0.8" fill="#8e8e8e"/><rect x="39.4" y="107.9" width="2" height="0.8" fill="#8e8e8e"/><rect x="39.4" y="112.4" width="2" height="0.8" fill="#8e8e8e"/><rect x="39.4" y="116.9" width="2" height="0.8" fill="#8e8e8e"/><rect x="38.1" y="121.4" width="3.3" height="0.8" fill="#8e8e8e"/><rect x="39.4" y="125.9" width="2" height="0.8" fill="#8e8e8e"/><rect x="39.4" y="130.4" width="2" height="0.8" fill="#8e8e8e"/><rect x="39.4" y="134.9" width="2" height="0.8" fill="#8e8e8e"/><rect x="39.4" y="139.4" width="2" height="0.8" fill="#8e8e8e"/><rect x="28" y="143.9" width="13.4" height="0.8" fill="#6c6c6c"/><rect x="39.4" y="148.5" width="2" height="0.8" fill="#8e8e8e"/><rect x="39.4" y="153.0" width="2" height="0.8" fill="#8e8e8e"/><rect x="39.4" y="157.5" width="2" height="0.8" fill="#8e8e8e"/><rect x="39.4" y="162.0" width="2" height="0.8" fill="#8e8e8e"/><rect x="38.1" y="166.5" width="3.3" height="0.8" fill="#8e8e8e"/><rect x="39.4" y="171.0" width="2" height="0.8" fill="#8e8e8e"/><rect x="39.4" y="175.5" width="2" height="0.8" fill="#8e8e8e"/><rect x="39.4" y="180.0" width="2" height="0.8" fill="#8e8e8e"/><rect x="39.4" y="184.5" width="2" height="0.8" fill="#8e8e8e"/><rect x="28" y="189.0" width="13.4" height="0.8" fill="#6c6c6c"/><rect x="39.4" y="193.6" width="2" height="0.8" fill="#8e8e8e"/><rect x="39.4" y="198.1" width="2" height="0.8" fill="#8e8e8e"/><rect x="39.4" y="202.6" width="2" height="0.8" fill="#8e8e8e"/><rect x="39.4" y="207.1" width="2" height="0.8" fill="#8e8e8e"/><rect x="38.1" y="211.6" width="3.3" height="0.8" fill="#8e8e8e"/><rect x="39.4" y="216.1" width="2" height="0.8" fill="#8e8e8e"/><rect x="39.4" y="220.6" width="2" height="0.8" fill="#8e8e8e"/><rect x="39.4" y="225.1" width="2" height="0.8" fill="#8e8e8e"/><rect x="39.4" y="229.6" width="2" height="0.8" fill="#8e8e8e"/><rect x="28" y="234.1" width="13.4" height="0.8" fill="#6c6c6c"/><rect x="39.4" y="238.7" width="2" height="0.8" fill="#8e8e8e"/><rect x="39.4" y="243.2" width="2" height="0.8" fill="#8e8e8e"/><rect x="39.4" y="247.7" width="2" height="0.8" fill="#8e8e8e"/><rect x="39.4" y="252.2" width="2" height="0.8" fill="#8e8e8e"/><rect x="38.1" y="256.7" width="3.3" height="0.8" fill="#8e8e8e"/><rect x="39.4" y="261.2" width="2" height="0.8" fill="#8e8e8e"/><rect x="39.4" y="265.7" width="2" height="0.8" fill="#8e8e8e"/><rect x="39.4" y="270.2" width="2" height="0.8" fill="#8e8e8e"/><rect x="39.4" y="274.7" width="2" height="0.8" fill="#8e8e8e"/><rect x="28" y="279.2" width="13.4" height="0.8" fill="#6c6c6c"/><rect x="39.4" y="283.8" width="2" height="0.8" fill="#8e8e8e"/><rect x="39.4" y="288.3" width="2" height="0.8" fill="#8e8e8e"/><rect x="39.4" y="292.8" width="2" height="0.8" fill="#8e8e8e"/><rect x="39.4" y="297.3" width="2" height="0.8" fill="#8e8e8e"/><rect x="38.1" y="301.8" width="3.3" height="0.8" fill="#8e8e8e"/><rect x="39.4" y="306.3" width="2" height="0.8" fill="#8e8e8e"/><rect x="39.4" y="310.8" width="2" height="0.8" fill="#8e8e8e"/><rect x="39.4" y="315.3" width="2" height="0.8" fill="#8e8e8e"/><rect x="39.4" y="319.8" width="2" height="0.8" fill="#8e8e8e"/><rect x="28" y="324.3" width="13.4" height="0.8" fill="#6c6c6c"/><rect x="39.4" y="328.9" width="2" height="0.8" fill="#8e8e8e"/><rect x="39.4" y="333.4" width="2" height="0.8" fill="#8e8e8e"/><rect x="39.4" y="337.9" width="2" height="0.8" fill="#8e8e8e"/><rect x="39.4" y="342.4" width="2" height="0.8" fill="#8e8e8e"/><rect x="38.1" y="346.9" width="3.3" height="0.8" fill="#8e8e8e"/><rect x="39.4" y="351.4" width="2" height="0.8" fill="#8e8e8e"/><rect x="39.4" y="355.9" width="2" height="0.8" fill="#8e8e8e"/><rect x="39.4" y="360.4" width="2" height="0.8" fill="#8e8e8e"/><rect x="39.4" y="364.9" width="2" height="0.8" fill="#8e8e8e"/><rect x="28" y="369.4" width="13.4" height="0.8" fill="#6c6c6c"/><rect x="39.4" y="374.0" width="2" height="0.8" fill="#8e8e8e"/><rect x="39.4" y="378.5" width="2" height="0.8" fill="#8e8e8e"/><rect x="39.4" y="383.0" width="2" height="0.8" fill="#8e8e8e"/><rect x="39.4" y="387.5" width="2" height="0.8" fill="#8e8e8e"/><rect x="38.1" y="392.0" width="3.3" height="0.8" fill="#8e8e8e"/><rect x="39.4" y="396.5" width="2" height="0.8" fill="#8e8e8e"/><rect x="39.4" y="401.0" width="2" height="0.8" fill="#8e8e8e"/><rect x="39.4" y="405.5" width="2" height="0.8" fill="#8e8e8e"/><rect x="39.4" y="410.0" width="2" height="0.8" fill="#8e8e8e"/><rect x="28" y="414.5" width="13.4" height="0.8" fill="#6c6c6c"/><rect x="39.4" y="419.1" width="2" height="0.8" fill="#8e8e8e"/><rect x="39.4" y="423.6" width="2" height="0.8" fill="#8e8e8e"/><rect x="39.4" y="428.1" width="2" height="0.8" fill="#8e8e8e"/><rect x="39.4" y="432.6" width="2" height="0.8" fill="#8e8e8e"/><rect x="38.1" y="437.1" width="3.3" height="0.8" fill="#8e8e8e"/><rect x="39.4" y="441.6" width="2" height="0.8" fill="#8e8e8e"/><rect x="39.4" y="446.1" width="2" height="0.8" fill="#8e8e8e"/><rect x="39.4" y="450.6" width="2" height="0.8" fill="#8e8e8e"/><rect x="39.4" y="455.1" width="2" height="0.8" fill="#8e8e8e"/><rect x="28" y="459.6" width="13.4" height="0.8" fill="#6c6c6c"/><rect x="39.4" y="464.2" width="2" height="0.8" fill="#8e8e8e"/><rect x="39.4" y="468.7" width="2" height="0.8" fill="#8e8e8e"/><rect x="39.4" y="473.2" width="2" height="0.8" fill="#8e8e8e"/><rect x="39.4" y="477.7" width="2" height="0.8" fill="#8e8e8e"/><rect x="38.1" y="482.2" width="3.3" height="0.8" fill="#8e8e8e"/><rect x="39.4" y="486.7" width="2" height="0.8" fill="#8e8e8e"/><rect x="39.4" y="491.2" width="2" height="0.8" fill="#8e8e8e"/><rect x="39.4" y="495.7" width="2" height="0.8" fill="#8e8e8e"/><rect x="39.4" y="500.2" width="2" height="0.8" fill="#8e8e8e"/><rect x="28" y="504.8" width="13.4" height="0.8" fill="#6c6c6c"/><rect x="39.4" y="509.3" width="2" height="0.8" fill="#8e8e8e"/><rect x="39.4" y="513.8" width="2" height="0.8" fill="#8e8e8e"/><text x="31.5" y="513" font-size="8" fill="#a8a8a8" font-family="Liberation Sans">1</text><text x="31.5" y="521" font-size="8" fill="#a8a8a8" font-family="Liberation Sans">0</text><rect x="41.4" y="77" width="1" height="441" fill="#151515"/></svg><!-- /ruler -->
<div class="a" style="left:28px;top:518px;width:170px;height:11px;background:#4f4f4f"></div><div class="a" style="left:198px;top:518px;width:1px;height:11px;background:#3e3e3e"></div><div class="a" style="left:28px;top:518px;width:35px;height:11px;background:#525252"></div>
<div class="a" style="left:31.5px;top:518.5px;font-size:8.4px;line-height:11px;color:#d8d8d8;white-space:nowrap">66.67%</div>
<svg class="a" style="left:188px;top:519px" width="8" height="10" viewBox="0 0 8 10"><path d="M2.5,1 L5.5,5 L2.5,9" fill="none" stroke="#bbb" stroke-width="0.9"/></svg>
<!-- menubar -->
<div class="a" style="left:4.6px;top:-0.8px;font-size:15px;color:#72a9de;line-height:15px;-webkit-text-stroke:0.8px #72a9de;transform:scaleX(0.86);transform-origin:0 0">Ps</div>
<div class="a" style="left:29px;top:3px;width:37px;height:11px;background:#323232"></div>
<div class="a mt" style="left:33px">文件(F)</div>
<div class="a mt" style="left:72px">编辑(E)</div>
<div class="a mt" style="left:111px">图像(I)</div>
<div class="a mt" style="left:148px">图层(L)</div>
<div class="a mt" style="left:186px">文字(Y)</div>
<div class="a mt" style="left:226px">选择(S)</div>
<div class="a mt" style="left:265px">滤镜(T)</div>
<div class="a mt" style="left:304px">3D(D)</div>
<div class="a mt" style="left:336px">视图(V)</div>
<div class="a mt" style="left:376px">窗口(W)</div>
<div class="a mt" style="left:418px">帮助(H)</div>

<!-- menu -->
<div class="a" id="menu">
<div class="a mi" style="top:4.2px">新建(N)<span class="dd">...</span></div>
<div class="a sc" style="top:4.2px">Ctrl+N</div>
<div class="a mi" style="top:20.2px">打开(O)<span class="dd">...</span></div>
<div class="a sc" style="top:20.2px">Ctrl+O</div>
<div class="a mi" style="top:35.2px">在 Bridge 中浏览(B)<span class="dd">...</span></div>
<div class="a sc" style="top:35.2px">Alt+Ctrl+O</div>
<div class="a mi" style="top:50.6px">打开为<span class="dd">...</span></div>
<div class="a sc" style="top:50.6px">Alt+Shift+Ctrl+O</div>
<div class="a mi" style="top:66.2px">打开为智能对象<span class="dd">...</span></div>
<div class="a mi" style="top:81.7px">最近打开文件(T)</div>
<div class="a arr" style="top:84.2px"></div>
<div class="a sep" style="top:97.0px"></div>
<div class="a mi" style="top:103.3px">关闭(C)</div>
<div class="a sc" style="top:103.3px">Ctrl+W</div>
<div class="a mi" style="top:118.3px">关闭全部</div>
<div class="a sc" style="top:118.3px">Alt+Ctrl+W</div>
<div class="a mi" style="top:133.6px">关闭并转到 Bridge<span class="dd">...</span></div>
<div class="a sc" style="top:133.6px">Shift+Ctrl+W</div>
<div class="a mi" style="top:148.9px">存储(S)</div>
<div class="a sc" style="top:148.9px">Ctrl+S</div>
<div class="a mi" style="top:164.2px">存储为(A)<span class="dd">...</span></div>
<div class="a sc" style="top:164.2px">Shift+Ctrl+S</div>
<div class="a mi dis" style="top:179.5px">签入(I)<span class="dd">...</span></div>
<div class="a" style="left:2px;top:192.9px;width:192px;height:15.6px;background:#0a78d7"></div>
<div class="a mi" style="color:#fff;top:194.7px">恢复(V)</div>
<div class="a sc" style="color:#fff;top:194.7px">F12</div>
<div class="a sep" style="top:211.4px"></div>
<div class="a mi" style="top:217.7px">导出(E)</div>
<div class="a arr" style="top:220.2px"></div>
<div class="a mi" style="top:232.7px">生成</div>
<div class="a arr" style="top:235.2px"></div>
<div class="a mi" style="top:247.6px">在 Behance 上共享(D)<span class="dd">...</span></div>
<div class="a sep" style="top:263.9px"></div>
<div class="a mi" style="top:270.0px">搜索 Adobe Stock<span class="dd">...</span></div>
<div class="a mi" style="top:285.0px">置入嵌入的智能对象(L)<span class="dd">...</span></div>
<div class="a mi" style="top:300.2px">置入链接的智能对象(K)<span class="dd">...</span></div>
<div class="a mi dis" style="top:315.5px">打包(G)<span class="dd">...</span></div>
<div class="a sep" style="top:331.5px"></div>
<div class="a mi" style="top:338.4px">自动(U)</div>
<div class="a arr" style="top:340.9px"></div>
<div class="a mi" style="top:353.8px">脚本(R)</div>
<div class="a arr" style="top:356.3px"></div>
<div class="a mi" style="top:369.0px">导入(M)</div>
<div class="a arr" style="top:371.5px"></div>
<div class="a sep" style="top:385.0px"></div>
<div class="a mi" style="top:389.6px">文件简介(F)<span class="dd">...</span></div>
<div class="a sc" style="top:389.6px">Alt+Shift+Ctrl+I</div>
<div class="a sep" style="top:406.4px"></div>
<div class="a mi" style="top:411.6px">打印(P)<span class="dd">...</span></div>
<div class="a sc" style="top:411.6px">Ctrl+P</div>
<div class="a mi" style="top:427.0px">打印一份(Y)</div>
<div class="a sc" style="top:427.0px">Alt+Shift+Ctrl+P</div>
<div class="a sep" style="top:443.0px"></div>
<div class="a mi" style="top:449.6px">退出(X)</div>
<div class="a sc" style="top:449.6px">Ctrl+Q</div>
</div>
</body></html>
